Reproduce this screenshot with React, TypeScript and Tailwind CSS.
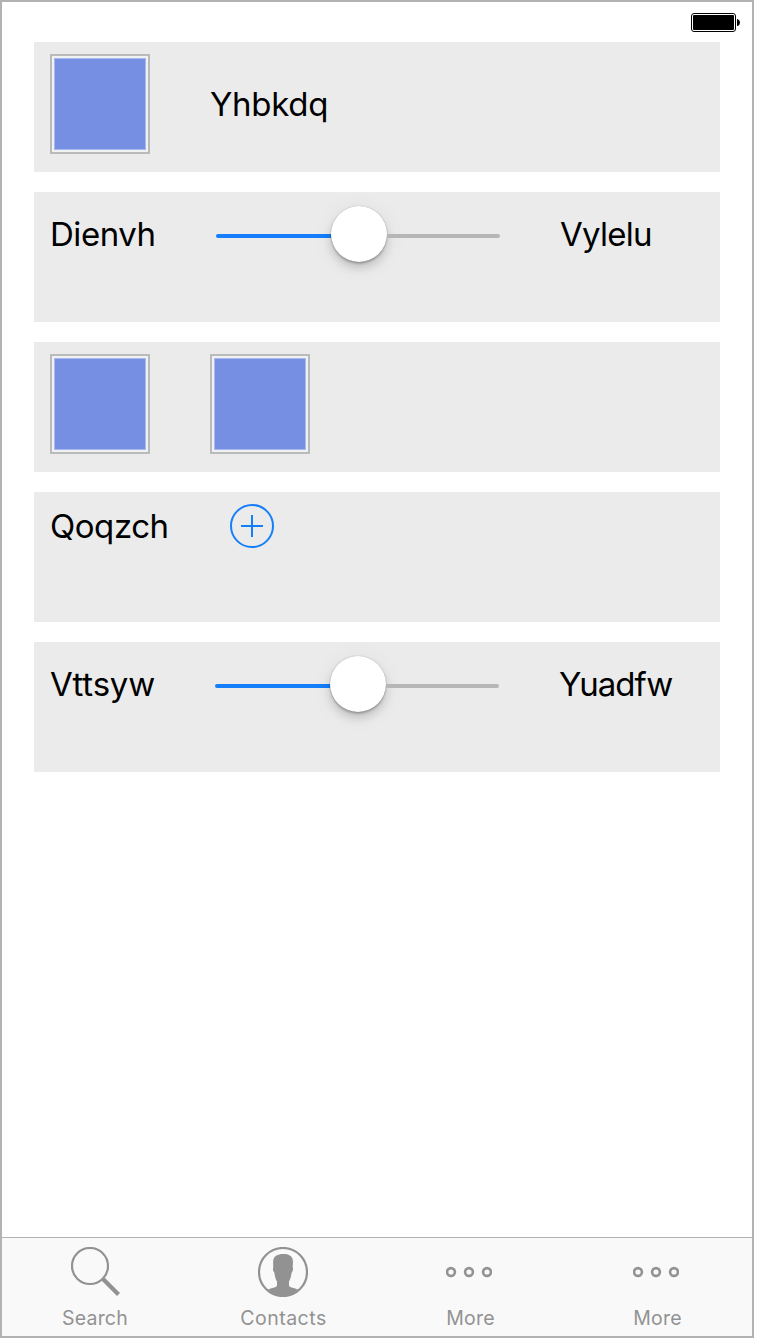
import type { ReactNode } from "react";

function Row({ children }: { children: ReactNode }) {
  return <section className="flex h-[130px] w-[686px] items-start bg-[#ebebeb] pl-4">{children}</section>;
}

function Label({ text, className }: { text: string; className: string }) {
  return (
    <span className={`block shrink-0 whitespace-nowrap text-[33px] leading-10 text-black ${className}`}>{text}</span>
  );
}

function Swatch({ className = "" }: { className?: string }) {
  return (
    <div className={`mt-3 size-[100px] shrink-0 border-2 border-[#b9bbbb] bg-[#f0f1f3] p-0.5 ${className}`}>
      <div className="size-full border border-[#a9b8ec] bg-[#778fe2]" />
    </div>
  );
}

function Slider() {
  return (
    <div className="mt-[14px] flex h-14 w-[284px] shrink-0 items-center">
      <div className="mt-1 h-1 w-[115px] rounded-l-full bg-[#157efb]" />
      <div className="size-14 shrink-0 rounded-full bg-white shadow-[0_0_1px_rgba(0,0,0,0.35),0_2px_2px_rgba(0,0,0,0.2),0_6px_10px_rgba(0,0,0,0.16),0_3px_26px_rgba(0,0,0,0.05)]" />
      <div className="mt-1 h-1 flex-1 rounded-r-full bg-[#b6b6b6]" />
    </div>
  );
}

function BatteryIcon() {
  return (
    <svg width="50" height="19" viewBox="0 0 50 19" fill="none">
      <rect x="0.5" y="0.5" width="44" height="18" rx="2.5" stroke="#000" />
      <rect x="2" y="2" width="41" height="15" rx="1" fill="#000" />
      <path d="M46 6h.5Q49 7 49 9.5T46.5 13H46Z" fill="#000" />
    </svg>
  );
}

function AddIcon() {
  return (
    <svg className="ml-[61px] mt-3 shrink-0" width="44" height="44" viewBox="0 0 44 44" fill="none" stroke="#157efb" strokeWidth="2">
      <circle cx="22" cy="22" r="21" />
      <path d="M22 11v22M11 22h22" />
    </svg>
  );
}

function SearchIcon() {
  return (
    <svg className="ml-0.5" width="50" height="50" viewBox="0 0 50 50" fill="none" stroke="#929292">
      <circle cx="19" cy="19" r="18" strokeWidth="2.2" />
      <path d="m32 32 15.5 15.5" strokeWidth="4.2" />
    </svg>
  );
}

function ContactsIcon() {
  return (
    <svg className="ml-0.5" width="50" height="50" viewBox="0 0 50 50" fill="none">
      <circle cx="25" cy="25" r="24" stroke="#929292" strokeWidth="2.2" />
      <path
        fill="#929292"
        d="M15.3 13C15.8 9.3 19.500 7 25.200 7c5.600 0 8.900 2 9.500 5.500.4 2.500.2 5 0 8 .7.500.3 4-1 5-.5 3.700-1.300 6.500-2.600 8.700-.3 2-.1 4.300.2 5 1 1.200 5 1.600 8.600 3.400C36 46.500 31 50 25 50S14 46.500 10.100 42.600c3.600-1.800 7.600-2.200 8.600-3.400.3-.7.500-3 .2-5-1.300-2.200-2.100-5-2.600-8.700-1.300-1-1.700-4.500-1-5-.2-3-.3-5 0-7.500Z"
      />
    </svg>
  );
}

function MoreIcon() {
  return (
    <svg width="46" height="50" viewBox="0 0 46 50" fill="none" stroke="#929292" strokeWidth="2.6">
      <circle cx="5" cy="25" r="3.9" />
      <circle cx="23" cy="25" r="3.9" />
      <circle cx="41" cy="25" r="3.9" />
    </svg>
  );
}

function Tab({ icon, label, width, className }: { icon: ReactNode; label: string; width: string; className: string }) {
  return (
    <div className={`flex flex-col items-center pt-[9px] ${width}`}>
      <div className="mr-[3px] h-[50px]">{icon}</div>
      <span className={`mt-[9px] whitespace-nowrap text-[19.5px] leading-6 text-[#929292] ${className}`}>{label}</span>
    </div>
  );
}

export default function App() {
  return (
    <div className="h-[1340px] w-[760px] bg-white font-['Inter',sans-serif]">
      <div className="flex h-[1338px] w-[754px] flex-col border-2 border-[#b2b2b2] bg-white">
        <header className="flex h-10 shrink-0 justify-end pr-[11px] pt-[11px]">
          <BatteryIcon />
        </header>
        <main className="flex flex-1 flex-col gap-5 pl-8">
          <Row>
            <Swatch />
            <Label text="Yhbkdq" className="ml-[60px] mt-[42px] tracking-[-0.3px]" />
          </Row>
          <Row>
            <Label text="Dienvh" className="mt-[22px] w-[166px] tracking-[-0.45px]" />
            <Slider />
            <Label text="Vylelu" className="ml-[60px] mt-[22px] tracking-[-0.75px]" />
          </Row>
          <Row>
            <Swatch />
            <Swatch className="ml-[60px]" />
          </Row>
          <Row>
            <Label text="Qoqzch" className="mt-[14px] w-[119px] tracking-[-0.45px]" />
            <AddIcon />
          </Row>
          <Row>
            <Label text="Vttsyw" className="mt-[22px] w-[165px] tracking-[-0.2px]" />
            <Slider />
            <Label text="Yuadfw" className="ml-[60px] mt-[22px] tracking-[-0.95px]" />
          </Row>
        </main>
        <nav className="flex h-[99px] shrink-0 border-t border-[#b2b2b2] bg-[#f9f9f9]">
          <Tab icon={<SearchIcon />} label="Search" width="w-[188px]" className="mr-[2px] tracking-[0.2px]" />
          <Tab icon={<ContactsIcon />} label="Contacts" width="w-[187px]" className="tracking-[0.5px]" />
          <Tab icon={<MoreIcon />} label="More" width="w-[187px]" className="tracking-[0.2px]" />
          <Tab icon={<MoreIcon />} label="More" width="w-[187px]" className="tracking-[0.2px]" />
        </nav>
      </div>
    </div>
  );
}
